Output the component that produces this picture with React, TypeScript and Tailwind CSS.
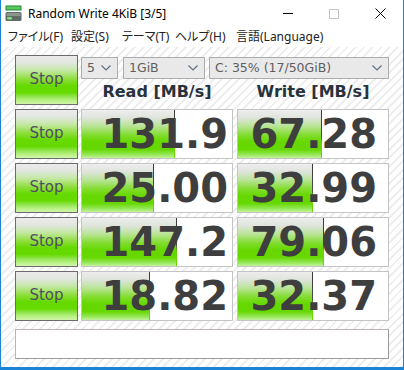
import React from "react";

const rows = [
  { read: "131.9", readPct: 62, write: "67.28", writePct: 56 },
  { read: "25.00", readPct: 48, write: "32.99", writePct: 50 },
  { read: "147.2", readPct: 63, write: "79.06", writePct: 57 },
  { read: "18.82", readPct: 45, write: "32.37", writePct: 50 },
];

const menu = [
  { label: "ファイル(F)", w: "w-[63px]" },
  { label: "設定(S)", w: "w-[51px]" },
  { label: "テーマ(T)", w: "w-[53px]" },
  { label: "ヘルプ(H)", w: "w-[61px]" },
  { label: "言語(Language)", w: "w-auto" },
];

const StopButton = () => (
  <div className="w-[63px] h-[50px] shrink-0 border border-[#6c6c6c] flex items-center justify-center bg-[image:linear-gradient(to_bottom,#ececec_0%,#e2e6e0_14%,#c4e8a4_30%,#8ede3c_48%,#66da00_62%,#66da00_76%,#8ee44a_84%,#b6f080_92%,#d2f6ac_100%)]">
    <span className="font-['DejaVu_Sans',sans-serif] text-[15px] text-[#4e4e62] leading-none mb-[2px]">
      Stop
    </span>
  </div>
);

const Cell = ({ value, pct, pr }: { value: string; pct: number; pr: string }) => (
  <div className="relative w-[152px] h-[50px] shrink-0 border border-[#c4c4c4] bg-white">
    <div
      className="absolute left-0 top-0 bottom-0 bg-[image:linear-gradient(to_bottom,#eeeeee_0%,#dfe4dc_16%,#b8e494_34%,#82dc30_52%,#66d800_66%,#66d800_82%,#90e650_92%,#c4f29a_100%)]"
      style={{ width: `${pct}%` }}
    >
      <div className="absolute right-0 top-0 bottom-0 w-px bg-[image:linear-gradient(to_bottom,#3a3a3a_0%,#4a4a4a_55%,#66d800_70%,#66d800_100%)]" />
    </div>
    <div
      className={`relative h-full flex items-center justify-end ${pr} font-['DejaVu_Sans',sans-serif] font-bold text-[40px] leading-none text-[#3e3e3e]`}
    >
      {value}
    </div>
  </div>
);

const Combo = ({ text, w }: { text: string; w: string }) => (
  <div
    className={`${w} h-[22px] shrink-0 border border-[#acacac] bg-[#e9e9e9] flex items-center justify-between pl-[5px] pr-[6px]`}
  >
    <span className="font-['DejaVu_Sans',sans-serif] text-[12.5px] text-[#5e5e5e] whitespace-nowrap">
      {text}
    </span>
    <svg width="10" height="6" viewBox="0 0 10 6">
      <path d="M0.5 0.5 L5 5 L9.5 0.5" fill="none" stroke="#607080" strokeWidth="1.2" />
    </svg>
  </div>
);

export default function App() {
  return (
    <div className="w-[404px] h-[370px] bg-[#1883d7] flex flex-col pl-px pr-px pb-[3px]">
      <div className="flex-1 flex flex-col bg-white">
        {/* title bar */}
        <div className="h-[27px] flex items-center shrink-0">
          <svg width="17" height="17" viewBox="0 0 17 17" className="ml-[4px]">
            <rect x="0.5" y="0.5" width="16" height="5" fill="#1f8a3a" />
            <rect x="1.5" y="1.5" width="14" height="3" fill="#5cc860" />
            <rect x="0.5" y="7" width="16" height="9" rx="1.5" fill="#5f6b63" />
            <rect x="1.5" y="8" width="14" height="3" fill="#8b968e" />
            <rect x="2" y="12" width="5" height="2.5" rx="1.2" fill="#7ee07e" />
          </svg>
          <span className="ml-[6px] font-['Noto_Sans',sans-serif] text-[12px] text-black">
            Random Write 4KiB [3/5]
          </span>
          <div className="ml-auto flex h-full">
            <div className="w-[46px] flex items-center justify-center">
              <div className="w-[10px] h-px bg-black" />
            </div>
            <div className="w-[46px] flex items-center justify-center">
              <div className="w-[10px] h-[10px] border border-[#c4c4c4]" />
            </div>
            <div className="w-[46px] flex items-center justify-center">
              <svg width="11" height="11" viewBox="0 0 11 11">
                <path d="M0.5 0.5 L10.5 10.5 M10.5 0.5 L0.5 10.5" stroke="#000" strokeWidth="1" />
              </svg>
            </div>
          </div>
        </div>

        {/* menu */}
        <div className="h-[20px] flex items-center pl-[7px] shrink-0">
          {menu.map((m) => (
            <div
              key={m.label}
              className={`${m.w} whitespace-nowrap font-['Noto_Sans','Noto_Sans_CJK_JP',sans-serif] text-[12px] text-[#222] [font-feature-settings:'palt']`}
            >
              {m.label}
            </div>
          ))}
        </div>

        {/* client */}
        <div className="flex-1 flex flex-col pt-[8px] pl-[14px] bg-[image:repeating-linear-gradient(135deg,#ffffff_0px,#ffffff_4px,#eeeeee_4px,#eeeeee_6px)]">
          <div className="flex flex-col gap-[4px]">
            <div className="flex h-[50px]">
              <StopButton />
              <div className="ml-[3px] w-[308px] flex flex-col">
                <div className="flex mt-[2px]">
                  <Combo text="5" w="w-[37px]" />
                  <Combo text="1GiB" w="w-[82px] ml-[5px]" />
                  <Combo text="C: 35% (17/50GiB)" w="w-[180px] ml-[4px]" />
                </div>
                <div className="flex flex-1 items-center font-['DejaVu_Sans',sans-serif] font-bold text-[16px] text-[#28323c]">
                  <div className="w-[152px] text-center">Read [MB/s]</div>
                  <div className="w-[152px] ml-[4px] text-center">Write [MB/s]</div>
                </div>
              </div>
            </div>
            {rows.map((r, i) => (
              <div key={i} className="flex h-[50px]">
                <StopButton />
                <div className="ml-[3px]">
                  <Cell value={r.read} pct={r.readPct} pr="pr-[4px]" />
                </div>
                <div className="ml-[4px]">
                  <Cell value={r.write} pct={r.writePct} pr="pr-[11px]" />
                </div>
              </div>
            ))}
          </div>
          <div className="mt-[8px] w-[374px] h-[30px] border border-[#bdb4b4] border-b-[#9a9a9a] border-r-[#9a9a9a] bg-white" />
        </div>
      </div>
    </div>
  );
}
